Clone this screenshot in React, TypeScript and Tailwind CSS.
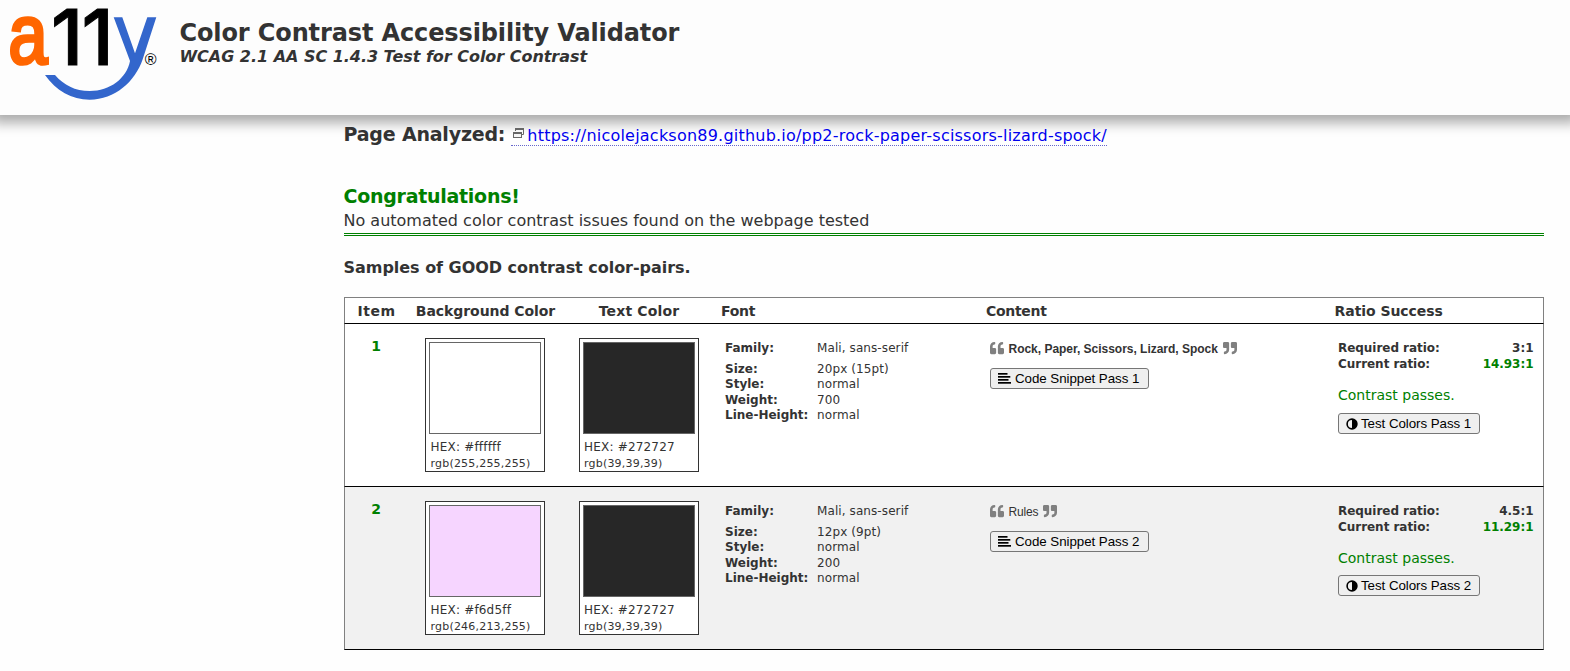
import { FaQuoteLeft, FaQuoteRight } from "react-icons/fa";

type Swatch = { hex: string; rgb: string };

type Sample = {
  item: number;
  background: Swatch;
  text: Swatch;
  size: string;
  weight: string;
  content: string;
  bold: boolean;
  required: string;
  current: string;
};

const samples: Sample[] = [
  {
    item: 1,
    background: { hex: "#ffffff", rgb: "rgb(255,255,255)" },
    text: { hex: "#272727", rgb: "rgb(39,39,39)" },
    size: "20px (15pt)",
    weight: "700",
    content: "Rock, Paper, Scissors, Lizard, Spock",
    bold: true,
    required: "3:1",
    current: "14.93:1",
  },
  {
    item: 2,
    background: { hex: "#f6d5ff", rgb: "rgb(246,213,255)" },
    text: { hex: "#272727", rgb: "rgb(39,39,39)" },
    size: "12px (9pt)",
    weight: "200",
    content: "Rules",
    bold: false,
    required: "4.5:1",
    current: "11.29:1",
  },
];

const columns = "grid grid-cols-[62px_156px_151px_265px_348px_216px] border-x border-b border-x-[#808080] border-b-black";

function Logo() {
  return (
    <svg width="160" height="104" viewBox="0 0 160 104" className="shrink-0 overflow-visible" role="img" aria-label="a11y">
      <text
        x="8.5"
        y="63"
        fontSize="83"
        fill="#ff6600"
        stroke="#ff6600"
        strokeWidth="3.6"
        textLength="39"
        lengthAdjust="spacingAndGlyphs"
        className="font-['Liberation_Sans',sans-serif]"
      >
        a
      </text>
      <text
        x="51 81.4"
        y="64.5"
        fontSize="77.5"
        fill="#000"
        stroke="#000"
        strokeWidth="1"
        className="font-['Inter',sans-serif] font-medium"
      >
        11
      </text>
      <path
        fill="#3366cc"
        d="M113.7 17.3H122.3L135 53.3L147.3 17.3H156.3L142.7 59.3C135 81.7 115 99.7 89.7 99.7C71.7 99.7 56 90.7 45 75H55C64 85.3 75 91 89.7 91C110 91 126.7 78.3 130 61Z"
      />
      <text x="144.8" y="65" fontSize="16" fill="#000" className="font-['Liberation_Sans',sans-serif]">
        ®
      </text>
    </svg>
  );
}

function NewWindowIcon() {
  return (
    <svg width="12" height="11" viewBox="0 0 12 11" className="mt-[5px] mr-[3px] ml-[1px] shrink-0" fill="none" stroke="#666">
      <path d="M3.5 3V1.5H11.5V6.5H10" />
      <path d="M3 1H12" strokeWidth="2" />
      <rect x="1.5" y="4.5" width="8" height="5" fill="#f4f4f4" />
      <path d="M1 5H10" strokeWidth="2" />
    </svg>
  );
}

function AlignIcon() {
  return (
    <svg width="13" height="11" viewBox="0 0 13 11" fill="#000" className="shrink-0">
      <rect width="9.5" height="1.7" />
      <rect y="3" width="12.3" height="1.7" />
      <rect y="6" width="10.5" height="1.7" />
      <rect y="9" width="13" height="1.7" />
    </svg>
  );
}

function ContrastIcon() {
  return (
    <svg width="12" height="12" viewBox="0 0 12 12" className="shrink-0">
      <circle cx="6" cy="6" r="4.9" fill="none" stroke="#000" strokeWidth="1.6" />
      <path d="M6 1A5 5 0 0 1 6 11Z" fill="#000" />
    </svg>
  );
}

function ColorSwatch({ hex, rgb }: Swatch) {
  return (
    <div className="mx-auto mt-[14px] h-[134px] w-[120px] border border-[#333] bg-white p-[3px]">
      <div className="h-[92px] w-[112px] border border-[#666]" style={{ backgroundColor: hex }} />
      <div className="mt-[5px] pl-[1.5px] text-[12px] leading-4 tracking-[0.19px]">HEX: {hex}</div>
      <div className="pl-[1.5px] text-[11px] leading-[18px] tracking-[0.2px]">{rgb}</div>
    </div>
  );
}

function FontRow({ label, value }: { label: string; value: string }) {
  return (
    <div className="flex leading-[15.3px] first:h-[21px]">
      <dt className="w-[92px] font-bold">{label}</dt>
      <dd className="tracking-[0.09px]">{value}</dd>
    </div>
  );
}

const button =
  "flex h-[21px] items-center rounded-[3px] border border-[#767676] bg-[#efefef] pl-[7px] font-['Liberation_Sans',Arial,sans-serif] text-[13.333px] leading-[15px] tracking-[-0.05px] whitespace-nowrap text-black";

function SampleRow({ sample }: { sample: Sample }) {
  return (
    <div className={`${columns} group h-[163px] odd:bg-[#f1f1f1] even:bg-white`}>
      <div className="pt-[14px] text-center text-[14px] leading-4 font-bold text-[#008000]">{sample.item}</div>
      <ColorSwatch {...sample.background} />
      <ColorSwatch {...sample.text} />
      <dl className="pt-[17px] pl-[11px] text-[12px]">
        <FontRow label="Family:" value="Mali, sans-serif" />
        <FontRow label="Size:" value={sample.size} />
        <FontRow label="Style:" value="normal" />
        <FontRow label="Weight:" value={sample.weight} />
        <FontRow label="Line-Height:" value="normal" />
      </dl>
      <div className="flex flex-col items-start pt-[16px] pl-[11px]">
        <div
          className={`flex h-4 items-center font-['Liberation_Sans',Arial,sans-serif] text-[12px] ${
            sample.bold ? "font-bold tracking-[-0.02px]" : "tracking-[-0.2px]"
          }`}
        >
          <FaQuoteLeft size={14} className="text-[#808080]" />
          <span className="mt-px mr-[5px] ml-[4.5px]">{sample.content}</span>
          <FaQuoteRight size={14} className="text-[#808080]" />
        </div>
        <button className={`${button} mt-[12px] w-[159px]`}>
          <AlignIcon />
          <span className="ml-[4px]">Code Snippet Pass {sample.item}</span>
        </button>
      </div>
      <div className="pt-[16px] pr-[9.5px] pl-[11px]">
        <div className="flex justify-between text-[12px] leading-4 font-bold tracking-[-0.04px]">
          <span>Required ratio:</span>
          <span>{sample.required}</span>
        </div>
        <div className="flex justify-between text-[12px] leading-4 font-bold tracking-[-0.04px]">
          <span>Current ratio:</span>
          <span className="text-[#008000]">{sample.current}</span>
        </div>
        <p className="mt-[15px] text-[14px] leading-4 text-[#008000]">Contrast passes.</p>
        <button className={`${button} mt-[10px] w-[142px] group-odd:mt-[9px]`}>
          <ContrastIcon />
          <span className="ml-[3px]">Test Colors Pass {sample.item}</span>
        </button>
      </div>
    </div>
  );
}

export default function App() {
  return (
    <div className="h-[671px] overflow-hidden bg-[#fefefe] font-['DejaVu_Sans',Verdana,sans-serif] text-[#333]">
      <header className="flex h-[115px] bg-[#fdfdfd] shadow-[0_0_12px_8px_#ababab]">
        <Logo />
        <div className="pt-[19px] pl-[19.5px]">
          <h1 className="text-[24px] leading-[28px] font-bold tracking-[-0.121px]">Color Contrast Accessibility Validator</h1>
          <p className="text-[16px] leading-[20px] font-bold tracking-[-0.028px] italic">
            WCAG 2.1 AA SC 1.4.3 Test for Color Contrast
          </p>
        </div>
      </header>

      <main className="relative ml-[343px] w-[1200px] pt-[8px]">
        <div className="flex h-[24px] items-start">
          <h2 className="mr-[6px] pl-[0.5px] text-[19px] leading-[22px] font-bold tracking-[-0.19px] whitespace-nowrap">Page Analyzed:</h2>
          <a className="flex h-[23px] items-start border-b border-dotted border-[#6666cc] text-[16px] leading-[23px] tracking-[0.22px] text-[#0000ee]">
            <NewWindowIcon />
            <span className="mt-px">https://nicolejackson89.github.io/pp2-rock-paper-scissors-lizard-spock/</span>
          </a>
        </div>

        <section className="mt-[37px] ml-px h-[52px] w-[1200px] border-b-3 border-double border-[#008000]">
          <h2 className="-ml-[0.5px] text-[19px] leading-[24px] font-bold tracking-[-0.27px] text-[#008000]">Congratulations!</h2>
          <p className="-ml-[0.5px] pt-[2px] text-[16px] leading-[22px]">No automated color contrast issues found on the webpage tested</p>
        </section>

        <h3 className="mt-[22px] h-[39px] pl-[0.5px] text-[16px] leading-[20px] font-bold tracking-[-0.03px]">
          Samples of GOOD contrast color-pairs.
        </h3>

        <div className="ml-px w-[1200px]">
          <div className={`${columns} h-[27px] border-t border-t-[#808080] bg-white pt-px text-[14px] leading-[25px] font-bold`}>
            <div className="pl-px text-center tracking-[0.5px]">Item</div>
            <div className="pl-px text-center tracking-[-0.06px]">Background Color</div>
            <div className="pl-px text-center tracking-[0.15px]">Text Color</div>
            <div className="pl-[7px] tracking-[-0.3px]">Font</div>
            <div className="pl-[7px] tracking-[-0.3px]">Content</div>
            <div className="pl-[7.5px] tracking-[-0.05px]">Ratio Success</div>
          </div>
          {samples.map((sample) => (
            <SampleRow key={sample.item} sample={sample} />
          ))}
        </div>
      </main>
    </div>
  );
}
